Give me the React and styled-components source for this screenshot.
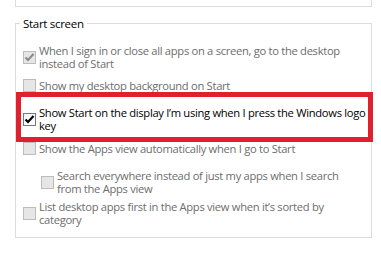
import React from "react";
import styled, { createGlobalStyle } from "styled-components";

const GlobalStyle = createGlobalStyle`
  html, body { margin: 0; padding: 0; background: #ffffff; }
  body { font-family: "Open Sans", "Noto Sans", sans-serif; font-size: 11.2px; }
`;

const Page = styled.div`
  padding-left: 15px;
  width: 357px;
`;

const TopPanel = styled.div`
  height: 7px;
  box-sizing: border-box;
  border: 1px solid #dcdcdc;
  border-top: none;
`;

const Group = styled.fieldset`
  margin: 10px 0 0;
  padding: 0 7px 11px;
  border: 1px solid #dcdcdc;
  min-width: 0;
  box-sizing: border-box;
  width: 357px;
`;

const Legend = styled.legend`
  padding: 0 3px;
  margin-left: -3px;
  font-size: 11.5px;
  line-height: 13px;
  color: #000;
  letter-spacing: -0.3px;
`;

const Option = styled.div`
  position: relative;
  display: flex;
  align-items: ${(p) => p.$align || "center"};
  gap: 3px;
  margin-top: ${(p) => p.$mt}px;
  margin-left: ${(p) => p.$indent || 0}px;
`;

const Label = styled.span`
  font-size: 11.2px;
  line-height: 13px;
  letter-spacing: -0.3px;
  white-space: nowrap;
  color: ${(p) => (p.$disabled ? "#6d6d6d" : "#000000")};
`;

const Box = styled.span`
  flex-shrink: 0;
  width: 13px;
  height: 13px;
  box-sizing: border-box;
  display: flex;
  align-items: center;
  justify-content: center;
  border: 1px solid ${(p) => (p.$disabled ? "#bcbcbc" : "#6f7b8a")};
  background: ${(p) =>
    p.$disabled ? "#e6e6e6" : "linear-gradient(#f2f4f7, #ffffff)"};
`;

const Frame = styled.span`
  position: absolute;
  left: -7px;
  right: -9px;
  top: -14px;
  bottom: -10px;
  border: 5px solid #e0202c;
  pointer-events: none;
`;

function Check({ checked, disabled }) {
  return (
    <Box $disabled={disabled}>
      {checked && (
        <svg width="11" height="11" viewBox="0 0 11 11">
          <path
            d="M1.5 5.5 L4 8 L9.5 2"
            fill="none"
            stroke={disabled ? "#8a8a8a" : "#000"}
            strokeWidth={disabled ? 2 : 2.2}
          />
        </svg>
      )}
    </Box>
  );
}

function Row({ mt, indent, align, checked, disabled, lines, highlight }) {
  return (
    <Option $mt={mt} $indent={indent} $align={align}>
      <Check checked={checked} disabled={disabled} />
      <Label $disabled={disabled}>
        {lines.map((l, i) => (
          <React.Fragment key={i}>
            {i > 0 && <br />}
            {l}
          </React.Fragment>
        ))}
      </Label>
      {highlight && <Frame />}
    </Option>
  );
}

export default function App() {
  return (
    <>
      <GlobalStyle />
      <Page>
        <TopPanel />
        <Group>
          <Legend>Start screen</Legend>
          <Row
            mt={14}
            checked
            disabled
            lines={[
              "When I sign in or close all apps on a screen, go to the desktop",
              "instead of Start",
            ]}
          />
          <Row mt={9} disabled lines={["Show my desktop background on Start"]} />
          <Row
            mt={14}
            checked
            highlight
            lines={[
              "Show Start on the display I\u2019m using when I press the Windows logo",
              "key",
            ]}
          />
          <Row
            mt={10}
            disabled
            lines={["Show the Apps view automatically when I go to Start"]}
          />
          <Row
            mt={14}
            indent={18}
            disabled
            lines={[
              "Search everywhere instead of just my apps when I search",
              "from the Apps view",
            ]}
          />
          <Row
            mt={5}
            disabled
            lines={[
              "List desktop apps first in the Apps view when it\u2019s sorted by",
              "category",
            ]}
          />
        </Group>
      </Page>
    </>
  );
}
